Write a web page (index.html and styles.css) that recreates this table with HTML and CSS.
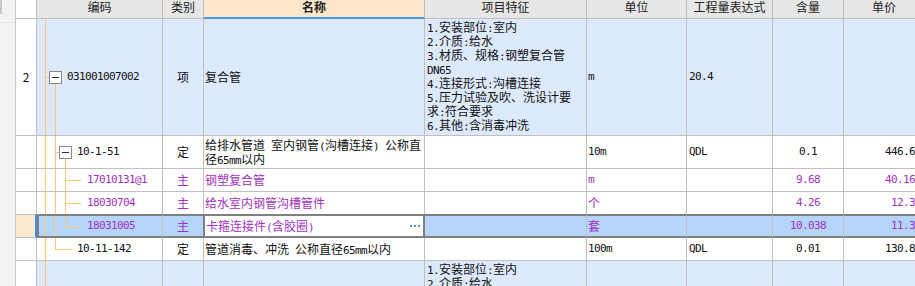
FILE: index.html
```html
<!DOCTYPE html>
<html lang="zh-CN">
<head>
<meta charset="utf-8">
<title>清单</title>
<link rel="stylesheet" href="styles.css">
</head>
<body>
<div class="page">
  <div class="strip">
    <div class="strip-tab"></div>
    <div class="strip-sep"></div>
  </div>
  <div class="grid">
    <div class="row head">
      <div class="c num"></div>
      <div class="c hc">编码</div>
      <div class="c hc">类别</div>
      <div class="c hc hname">名称</div>
      <div class="c hc">项目特征</div>
      <div class="c hc">单位</div>
      <div class="c hc">工程量表达式</div>
      <div class="c hc">含量</div>
      <div class="c hc">单价</div>
    </div>

    <div class="row r1 blue">
      <div class="c num ctr">2</div>
      <div class="c code l0"><span class="tl v x8"></span><span class="tl h x8 w4"></span><span class="tl v x18 below"></span><span class="box"></span><span class="mono">031001007002</span></div>
      <div class="c ctr">项</div>
      <div class="c name">复合管</div>
      <div class="c feat"><div>
        <div class="ln"><span class="a">1.</span>安装部位<span class="a">:</span>室内</div>
        <div class="ln"><span class="a">2.</span>介质<span class="a">:</span>给水</div>
        <div class="ln"><span class="a">3.</span>材质、规格<span class="a">:</span>钢塑复合管</div>
        <div class="ln"><span class="a">DN65</span></div>
        <div class="ln"><span class="a">4.</span>连接形式<span class="a">:</span>沟槽连接</div>
        <div class="ln"><span class="a">5.</span>压力试验及吹、洗设计要</div>
        <div class="ln">求<span class="a">:</span>符合要求</div>
        <div class="ln"><span class="a">6.</span>其他<span class="a">:</span>含消毒冲洗</div>
      </div></div>
      <div class="c unit mono">m</div>
      <div class="c expr mono">20.4</div>
      <div class="c ctr mono"></div>
      <div class="c price mono"></div>
    </div>

    <div class="row r2">
      <div class="c num"></div>
      <div class="c code l1"><span class="tl v x8"></span><span class="tl v x18"></span><span class="tl h x18 w4"></span><span class="tl v x28 below"></span><span class="box"></span><span class="mono">10-1-51</span></div>
      <div class="c ctr">定</div>
      <div class="c name"><div>
        <div class="ln">给排水管道<span class="a"> </span>室内钢管<span class="a">(</span>沟槽连接<span class="a">)</span><span class="a"> </span>公称直</div>
        <div class="ln">径<span class="a">65mm</span>以内</div>
      </div></div>
      <div class="c"></div>
      <div class="c unit mono">10m</div>
      <div class="c expr mono">QDL</div>
      <div class="c ctr mono">0.1</div>
      <div class="c price mono">446.63</div>
    </div>

    <div class="row r3 purple">
      <div class="c num"></div>
      <div class="c code l2"><span class="tl v x8"></span><span class="tl v x18"></span><span class="tl v x28"></span><span class="tl h x28 w16"></span><span class="mono">17010131@1</span></div>
      <div class="c ctr">主</div>
      <div class="c name">钢塑复合管</div>
      <div class="c"></div>
      <div class="c unit mono">m</div>
      <div class="c expr"></div>
      <div class="c ctr mono">9.68</div>
      <div class="c price mono">40.160</div>
    </div>

    <div class="row r4 purple">
      <div class="c num"></div>
      <div class="c code l2"><span class="tl v x8"></span><span class="tl v x18"></span><span class="tl v x28"></span><span class="tl h x28 w16"></span><span class="mono">18030704</span></div>
      <div class="c ctr">主</div>
      <div class="c name">给水室内钢管沟槽管件</div>
      <div class="c"></div>
      <div class="c unit">个</div>
      <div class="c expr"></div>
      <div class="c ctr mono">4.26</div>
      <div class="c price mono">12.36</div>
    </div>

    <div class="row sel purple">
      <div class="c num"></div>
      <div class="c code l2"><span class="tl v x6"></span><span class="tl v x16"></span><span class="tl v x26 upper"></span><span class="tl h x26 w16"></span><span class="mono">18031005</span></div>
      <div class="c ctr kind">主</div>
      <div class="c name focus"><span>卡箍连接件<span class="a">(</span>含胶圈<span class="a">)</span></span><span class="more"><i></i><i></i><i></i></span></div>
      <div class="c"></div>
      <div class="c unit">套</div>
      <div class="c expr"></div>
      <div class="c ctr mono">10.038</div>
      <div class="c price mono">11.36</div>
    </div>

    <div class="row r6">
      <div class="c num"></div>
      <div class="c code l1t"><span class="tl v x8"></span><span class="tl v x18 upper"></span><span class="tl h x18 w17"></span><span class="mono">10-11-142</span></div>
      <div class="c ctr">定</div>
      <div class="c name"><span>管道消毒、冲洗<span class="a"> </span>公称直径<span class="a">65mm</span>以内</span></div>
      <div class="c"></div>
      <div class="c unit mono">100m</div>
      <div class="c expr mono">QDL</div>
      <div class="c ctr mono">0.01</div>
      <div class="c price mono">130.84</div>
    </div>

    <div class="row r7 blue">
      <div class="c num"></div>
      <div class="c code l0"><span class="tl v x8"></span></div>
      <div class="c"></div>
      <div class="c"></div>
      <div class="c feat"><div>
        <div class="ln"><span class="a">1.</span>安装部位<span class="a">:</span>室内</div>
        <div class="ln"><span class="a">2.</span>介质<span class="a">:</span>给水</div>
      </div></div>
      <div class="c"></div>
      <div class="c"></div>
      <div class="c"></div>
      <div class="c"></div>
    </div>
  </div>
</div>
</body>
</html>
```

FILE: styles.css
```css
html, body {
  margin: 0;
  padding: 0;
  overflow: hidden;
  background: #ffffff;
}

body {
  font-family: "Noto Sans CJK SC", "Noto Sans", sans-serif;
  font-size: 12px;
  color: #111111;
}

.page {
  display: flex;
  width: 915px;
  height: 286px;
  overflow: hidden;
}

.strip {
  flex: none;
  box-sizing: border-box;
  width: 16px;
  background: #f3f3f3;
  border-right: 1px solid #c6c6c6;
}

.strip-tab {
  width: 2px;
  height: 14px;
  background: #c9c9c9;
}

.strip-sep {
  margin-top: 8px;
  height: 1px;
  background: #e4e4e4;
}

.grid {
  flex: none;
  width: 909px;
}

.row {
  display: grid;
  grid-template-columns: 21px 126px 41px 221px 162px 100px 86px 71px 81px;
}

.c {
  box-sizing: border-box;
  border-right: 1px solid #c0c0c0;
  border-bottom: 1px solid #c0c0c0;
  display: flex;
  align-items: center;
  overflow: hidden;
  white-space: nowrap;
  line-height: 14px;
  min-width: 0;
}

.ln {
  height: 14px;
  line-height: 14px;
}

.a,
.mono {
  font-family: "DejaVu Sans Mono", "Liberation Mono", monospace;
  font-size: 11px;
  letter-spacing: -0.62px;
}

.a { line-height: 0; }

/* header */
.head { height: 19px; }
.head .c {
  background: #e7e7e7;
  align-items: flex-start;
  justify-content: center;
  color: #222222;
  line-height: 14px;
}
.head .hname {
  background: #fde7ca;
  font-weight: bold;
  border-bottom: 2px solid #4598ee;
}

/* rows */
.r1 { height: 117px; }
.r2 { height: 33px; }
.r3 { height: 23px; }
.r4 { height: 22px; }
.r4 .c { border-bottom: 0; }
.sel { height: 24px; }
.r6 { height: 23px; }
.r7 { height: 40px; }

.blue .c { background: #dde9fd; }
.c.num { background: #ffffff; }
.num { justify-content: center; }

.ctr { justify-content: center; }
.name { padding-left: 1px; }
.unit { padding-left: 1px; }
.expr { padding-left: 2px; }
.price { justify-content: flex-end; padding-right: 3px; }

.feat {
  align-items: flex-start;
  padding-left: 2px;
  padding-top: 1px;
}

.purple .c { color: #a232c2; }

/* code column tree */
.code { position: relative; }
.l0 { padding-left: 12px; }
.l1 { padding-left: 22px; }
.l1t { padding-left: 40px; }
.l2 { padding-left: 50px; }

.box {
  flex: none;
  box-sizing: border-box;
  width: 13px;
  height: 13px;
  margin-right: 5px;
  border: 1px solid #8a8a8a;
  background: #ffffff;
  display: flex;
  align-items: center;
  justify-content: center;
  position: relative;
  z-index: 1;
}
.box::after {
  content: "";
  width: 7px;
  height: 1px;
  background: #333333;
}

.tl {
  position: absolute;
  background: #fbc87e;
}
.tl.v { width: 1px; top: 0; bottom: 0; }
.tl.h { height: 1px; top: 50%; }
.tl.below { top: calc(50% + 7px); }
.tl.upper { bottom: 50%; }
.x6 { left: 6px; }
.x8 { left: 8px; }
.x16 { left: 16px; }
.x18 { left: 18px; }
.x26 { left: 26px; }
.x28 { left: 28px; }
.w4 { width: 4px; }
.w16 { width: 16px; }
.w17 { width: 17px; }

/* selected row */
.sel .c {
  background: #b5d5fb;
  border-top: 2px solid #7f7f7f;
  border-bottom: 2px solid #7f7f7f;
}
.sel .c.num {
  background: #fde8d0;
  border-top: 1px solid #c0c0c0;
  border-bottom: 1px solid #c0c0c0;
  border-right: 2px solid #3c8cec;
}
.sel .code {
  border-left: 2px solid #7f7f7f;
  padding-left: 48px;
}
.sel .kind { border-right-color: #7f7f7f; }
.sel .c.focus {
  background: #ffffff;
  border-left: 1px solid #7f7f7f;
  border-right: 2px solid #7f7f7f;
  justify-content: space-between;
  padding-right: 3px;
}

.more {
  display: flex;
  gap: 2px;
  align-items: center;
}
.more i {
  display: block;
  width: 2px;
  height: 2px;
  background: #5f93cc;
}
```
